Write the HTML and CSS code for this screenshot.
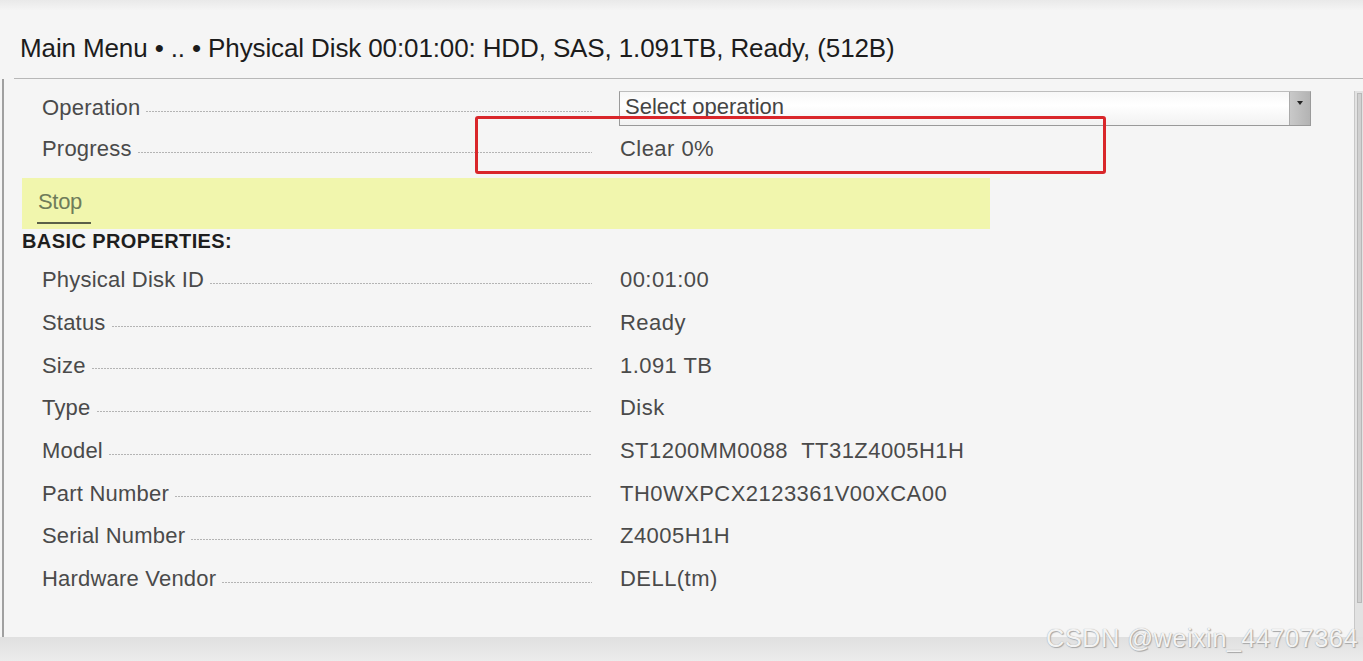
FILE: index.html
```html
<!DOCTYPE html>
<html>
<head>
<meta charset="utf-8">
<link rel="stylesheet" href="styles.css">
</head>
<body>
<div class="screen">
  <div class="topstrip"></div>
  <header class="header">
    <h1 class="title">Main Menu • .. • Physical Disk 00:01:00: HDD, SAS, 1.091TB, Ready, (512B)</h1>
  </header>
  <div class="main">
    <div class="panel">
      <div class="row op-row">
        <div class="label-cell"><span class="label">Operation</span><span class="leader"></span></div>
        <div class="select">
          <span class="select-text">Select operation</span>
          <span class="select-btn"><span class="arrow"></span></span>
        </div>
      </div>
      <div class="row prog-row">
        <div class="label-cell"><span class="label">Progress</span><span class="leader"></span></div>
        <span class="value">Clear 0%</span>
      </div>
      <div class="stop-band"><span class="stop">Stop</span></div>
      <div class="section">BASIC PROPERTIES:</div>
      <div class="props">
        <div class="row prop"><div class="label-cell"><span class="label">Physical Disk ID</span><span class="leader"></span></div><span class="value">00:01:00</span></div>
        <div class="row prop"><div class="label-cell"><span class="label">Status</span><span class="leader"></span></div><span class="value">Ready</span></div>
        <div class="row prop"><div class="label-cell"><span class="label">Size</span><span class="leader"></span></div><span class="value">1.091 TB</span></div>
        <div class="row prop"><div class="label-cell"><span class="label">Type</span><span class="leader"></span></div><span class="value">Disk</span></div>
        <div class="row prop"><div class="label-cell"><span class="label">Model</span><span class="leader"></span></div><span class="value">ST1200MM0088&nbsp;&nbsp;TT31Z4005H1H</span></div>
        <div class="row prop"><div class="label-cell"><span class="label">Part Number</span><span class="leader"></span></div><span class="value">TH0WXPCX2123361V00XCA00</span></div>
        <div class="row prop"><div class="label-cell"><span class="label">Serial Number</span><span class="leader"></span></div><span class="value">Z4005H1H</span></div>
        <div class="row prop"><div class="label-cell"><span class="label">Hardware Vendor</span><span class="leader"></span></div><span class="value">DELL(tm)</span></div>
      </div>
      <div class="highlight"></div>
    </div>
    <div class="scrollbar"><div class="thumb"></div></div>
  </div>
  <footer class="bottom"></footer>
  <div class="watermark">CSDN @weixin_44707364</div>
</div>
</body>
</html>
```
FILE: styles.css
```css
* { box-sizing: border-box; }
html, body { margin: 0; padding: 0; }
body {
  width: 1363px;
  height: 661px;
  overflow: hidden;
  background: #f5f5f5;
  font-family: "Liberation Sans", Arial, sans-serif;
}
.screen {
  position: relative;
  width: 1363px;
  height: 661px;
  display: flex;
  flex-direction: column;
}
.topstrip {
  height: 10px;
  background: linear-gradient(#e9e9e9, #f4f4f4);
}
.header {
  height: 69px;
  margin-left: 14px;
  border-bottom: 1px solid #b8b8b8;
  display: flex;
  align-items: center;
  padding-left: 6px;
  padding-top: 8px;
}
.title {
  margin: 0;
  font-size: 26px;
  font-weight: normal;
  color: #1c1c1c;
  letter-spacing: -0.12px;
}
.main {
  flex: 1;
  display: flex;
  min-height: 0;
}
.panel {
  position: relative;
  flex: 1;
  margin-left: 2px;
  border-left: 2px solid #a0a0a0;
  padding-top: 12px;
}
.row {
  display: flex;
  align-items: center;
}
.label-cell {
  width: 588px;
  padding-left: 38px;
  display: flex;
  align-items: center;
}
.label {
  font-size: 22px;
  color: #4a4a4a;
  letter-spacing: 0.2px;
  white-space: nowrap;
}
.leader {
  flex: 1;
  height: 1px;
  margin: 6px 0 0 6px;
  background-image: repeating-linear-gradient(90deg, #b4b4b4 0 2px, transparent 2px 3px);
}
.value {
  margin-left: 28px;
  font-size: 22px;
  color: #4a4a4a;
  letter-spacing: 0.45px;
  white-space: nowrap;
}
.op-row { height: 34px; }
.prog-row { height: 48px; }
.select {
  margin-left: 27px;
  width: 692px;
  height: 35px;
  border: 1px solid #9a9a9a;
  border-top-color: #bdbdbd;
  background: linear-gradient(#f7f7f7, #ffffff 40%, #f2f2f2);
  display: flex;
  align-items: center;
  justify-content: space-between;
  padding-left: 5px;
}
.select-text {
  font-size: 22px;
  color: #444;
  letter-spacing: 0px;
  margin-top: -2px;
}
.select-btn {
  width: 21px;
  height: 100%;
  background: linear-gradient(90deg, #c9c9c9, #b3b3b3);
  border-left: 1px solid #aaa;
  display: flex;
  justify-content: center;
  padding-top: 9px;
}
.arrow {
  width: 0;
  height: 0;
  border-left: 3px solid transparent;
  border-right: 3px solid transparent;
  border-top: 4px solid #222;
}
.stop-band {
  width: 968px;
  height: 51px;
  margin-left: 18px;
  margin-top: 5px;
  background: #f1f6ad;
  padding-left: 15px;
  display: flex;
  align-items: center;
}
.stop {
  font-size: 22px;
  color: #6f7c5a;
  letter-spacing: -0.3px;
  border-bottom: 2px solid #5a6048;
  padding: 0 9px 7px 1px;
  margin-top: 6px;
}
.section {
  margin-left: 18px;
  margin-top: -1px;
  font-size: 20px;
  font-weight: bold;
  color: #1e1e1e;
  letter-spacing: 0.4px;
  height: 27px;
  line-height: 27px;
}
.props {
  padding-top: 4px;
}
.prop { height: 42.7px; }
.highlight {
  position: absolute;
  left: 471px;
  top: 37px;
  width: 631px;
  height: 58px;
  border: 3px solid #d9262a;
  border-radius: 3px;
}
.scrollbar {
  width: 9px;
  margin-top: 12px;
  border-left: 1px solid #c8c8c8;
  background: #e2e2e2;
  position: relative;
}
.thumb {
  position: absolute;
  left: 2px;
  top: 2px;
  width: 5px;
  height: 510px;
  background: #d0d0d0;
  border: 1px solid #b8b8b8;
}
.bottom {
  height: 24px;
  background: linear-gradient(#e0e0e0, #ececec);
}
.watermark {
  position: absolute;
  right: 5px;
  bottom: 8px;
  font-family: "Liberation Sans", Arial, sans-serif;
  font-size: 25.5px;
  color: #f3f3f3;
  letter-spacing: 0.4px;
  text-shadow: 0 0 1px #9a9a9a, 1px 1px 1px #a8a8a8;
}
```
